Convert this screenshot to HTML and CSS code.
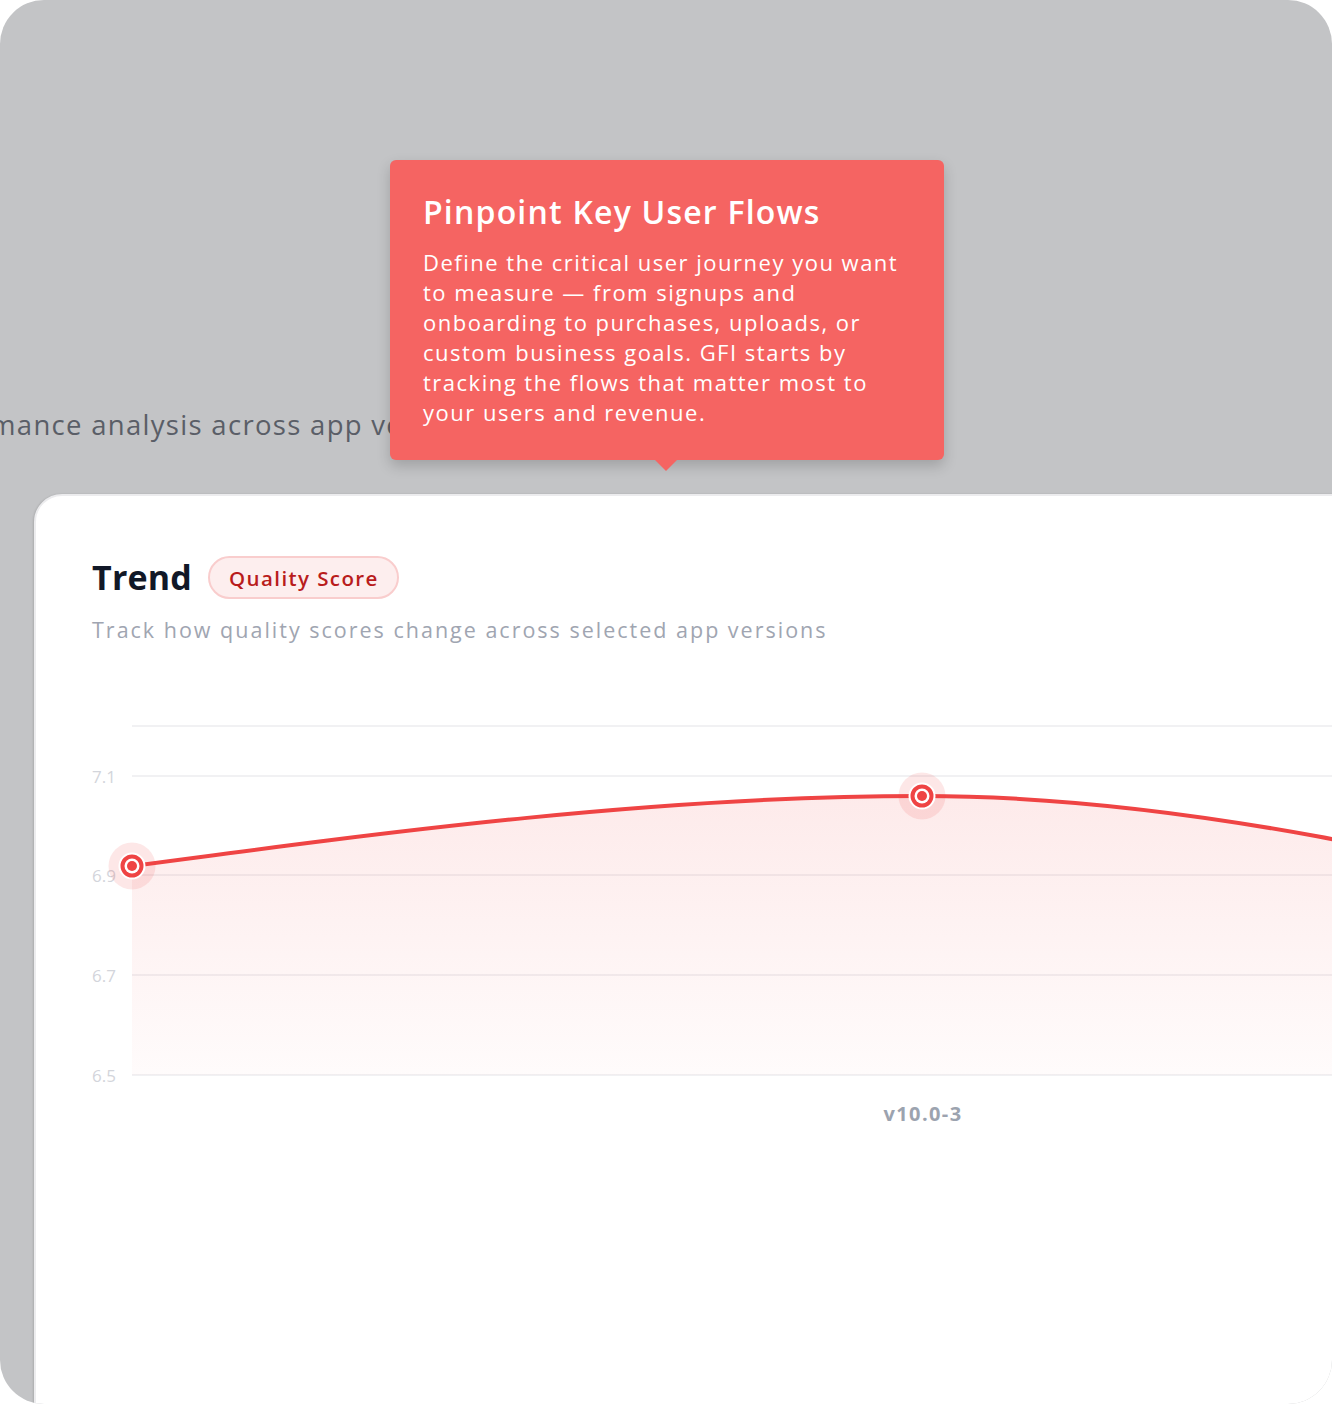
FILE: index.html
```html
<!DOCTYPE html>
<html lang="en">
<head>
    <meta charset="UTF-8">
    <meta name="viewport" content="width=device-width, initial-scale=1.0">
    <title>Quality Trend - Tour</title>
    <link rel="stylesheet" href="styles.css">
</head>
<body>
    <div class="frame">
        <p class="page-intro">Performance analysis across app versions</p>

        <section class="card">
            <div class="card-head">
                <h2 class="card-title">Trend</h2>
                <span class="badge">Quality Score</span>
            </div>
            <p class="card-sub">Track how quality scores change across selected app versions</p>

            <div class="chart">
                <svg class="chart-svg" width="1240" height="450" viewBox="0 0 1240 450">
                    <defs>
                        <linearGradient id="areaFill" x1="0" y1="0" x2="0" y2="1">
                            <stop offset="0" stop-color="#ef4444" stop-opacity="0.11"/>
                            <stop offset="1" stop-color="#ef4444" stop-opacity="0.02"/>
                        </linearGradient>
                    </defs>
                    <g class="grid">
                        <line x1="40" y1="26" x2="1240" y2="26"/>
                        <line x1="40" y1="76" x2="1240" y2="76"/>
                        <line x1="40" y1="175" x2="1240" y2="175"/>
                        <line x1="40" y1="275" x2="1240" y2="275"/>
                        <line x1="40" y1="375" x2="1240" y2="375"/>
                    </g>
                    <g class="y-axis">
                        <text x="24" y="76">7.1</text>
                        <text x="24" y="175">6.9</text>
                        <text x="24" y="275">6.7</text>
                        <text x="24" y="375">6.5</text>
                    </g>
                    <path class="area" d="M40,166 C303.3,131 566.7,96 830,96 C1093.3,96 1356.7,160.5 1620,225 L1620,375 L40,375 Z"/>
                    <path class="line" d="M40,166 C303.3,131 566.7,96 830,96 C1093.3,96 1356.7,160.5 1620,225"/>
                    <g class="dot">
                        <circle class="halo" cx="40" cy="166" r="23.5"/>
                        <circle class="ring" cx="40" cy="166" r="12.5"/>
                        <circle class="gap" cx="40" cy="166" r="7.5"/>
                        <circle class="core" cx="40" cy="166" r="5"/>
                    </g>
                    <g class="dot">
                        <circle class="halo" cx="830" cy="96" r="23.5"/>
                        <circle class="ring" cx="830" cy="96" r="12.5"/>
                        <circle class="gap" cx="830" cy="96" r="7.5"/>
                        <circle class="core" cx="830" cy="96" r="5"/>
                    </g>
                    <text class="x-label" x="831" y="413">v10.0-3</text>
                </svg>
            </div>
        </section>

        <div class="tour-tip">
            <h3 class="tour-title">Pinpoint Key User Flows</h3>
            <p class="tour-text">Define the critical user journey you want to measure — from signups and onboarding to purchases, uploads, or custom business goals. GFI starts by tracking the flows that matter most to your users and revenue.</p>
        </div>
    </div>
</body>
</html>
```

FILE: styles.css
```css
html, body {
    margin: 0;
    padding: 0;
    background: #ffffff;
}
body {
    font-family: "Open Sans", "Noto Sans", sans-serif;
}
.frame {
    position: relative;
    height: 1404px;
    overflow: hidden;
    background: #c3c4c6;
    border-radius: 44px;
}
.page-intro {
    margin: 0 0 0 -98px;
    padding-top: 407px;
    font-size: 27.5px;
    line-height: 36px;
    letter-spacing: 1.3px;
    color: #5a5e67;
    white-space: nowrap;
}
.card {
    box-sizing: border-box;
    width: 1400px;
    height: 1000px;
    margin: 51px 0 0 34px;
    padding: 60px 0 0 56px;
    background: #ffffff;
    border: 2px solid #ececee;
    border-radius: 28px 0 0 0;
    box-shadow: -1px 0 2px rgba(0, 0, 0, 0.12);
}
.card-head {
    display: flex;
    align-items: center;
    gap: 16px;
}
.card-title {
    margin: 0;
    font-size: 34px;
    line-height: 43px;
    font-weight: 700;
    letter-spacing: 0.2px;
    color: #111827;
}
.badge {
    box-sizing: border-box;
    height: 43px;
    padding: 0 18px 0 19px;
    display: flex;
    align-items: center;
    font-size: 20.5px;
    font-weight: 600;
    letter-spacing: 1.4px;
    color: #b91c1c;
    background: #fdeeee;
    border: 2px solid #f9cdcd;
    border-radius: 22px;
}
.card-sub {
    margin: 16px 0 0;
    font-size: 21.5px;
    line-height: 30px;
    letter-spacing: 2px;
    color: #a0a5b1;
}
.chart {
    margin-top: 55px;
}
.chart-svg {
    display: block;
    overflow: hidden;
}
.grid line {
    stroke: #f1f1f3;
    stroke-width: 2;
}
.y-axis text {
    font-size: 17px;
    fill: #d3d5db;
    text-anchor: end;
    dominant-baseline: central;
}
.area {
    fill: url(#areaFill);
}
.line {
    fill: none;
    stroke: #ef4444;
    stroke-width: 4;
}
.halo {
    fill: #ef4444;
    fill-opacity: 0.13;
}
.ring {
    fill: #ef4444;
    stroke: #ffffff;
    stroke-width: 2;
}
.gap {
    fill: #ffffff;
}
.core {
    fill: #ef4444;
}
.x-label {
    font-size: 20px;
    font-weight: 700;
    letter-spacing: 1.4px;
    fill: #9ca3af;
    text-anchor: middle;
    dominant-baseline: central;
}
.tour-tip {
    position: absolute;
    left: 390px;
    top: 160px;
    box-sizing: border-box;
    width: 554px;
    height: 300px;
    padding: 30px 33px;
    background: #f56462;
    border-radius: 6px;
    box-shadow: 0 6px 14px rgba(0, 0, 0, 0.18);
    color: #ffffff;
}
.tour-tip::after {
    content: "";
    position: absolute;
    left: 265px;
    bottom: -11px;
    border-left: 11px solid transparent;
    border-right: 11px solid transparent;
    border-top: 11px solid #f56462;
}
.tour-title {
    margin: 0;
    font-size: 32px;
    line-height: 44px;
    font-weight: 600;
    letter-spacing: 1.2px;
}
.tour-text {
    margin: 13px 0 0;
    font-size: 22px;
    line-height: 30px;
    letter-spacing: 1.5px;
}
```
